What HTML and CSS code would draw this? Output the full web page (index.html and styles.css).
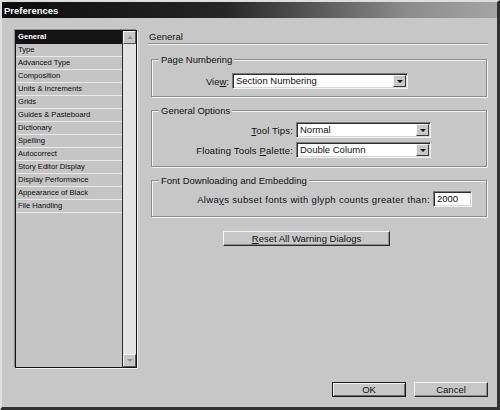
FILE: index.html
```html
<!DOCTYPE html>
<html>
<head>
<meta charset="utf-8">
<title>Preferences</title>
<link rel="stylesheet" href="styles.css">
</head>
<body>
<div class="window">
  <div class="titlebar"><span class="title">Preferences</span></div>
  <div class="content">
    <div class="top">
      <div class="list">
        <ul class="items">
          <li class="item selected">General</li>
          <li class="item">Type</li>
          <li class="item">Advanced Type</li>
          <li class="item">Composition</li>
          <li class="item">Units &amp; Increments</li>
          <li class="item">Grids</li>
          <li class="item">Guides &amp; Pasteboard</li>
          <li class="item">Dictionary</li>
          <li class="item">Spelling</li>
          <li class="item">Autocorrect</li>
          <li class="item">Story Editor Display</li>
          <li class="item">Display Performance</li>
          <li class="item">Appearance of Black</li>
          <li class="item">File Handling</li>
        </ul>
        <div class="scrollbar">
          <div class="sb-btn"><span class="sb-arrow up"></span></div>
          <div class="sb-track"></div>
          <div class="sb-btn"><span class="sb-arrow down"></span></div>
        </div>
      </div>
      <div class="panel">
        <div class="heading">General</div>
        <fieldset class="group g1">
          <legend>Page Numbering</legend>
          <div class="row">
            <span class="lbl lbl-g1">Vie<u>w</u>:</span>
            <div class="select sel-g1"><span class="val">Section Numbering</span><span class="arrow-btn"><span class="tri"></span></span></div>
          </div>
        </fieldset>
        <fieldset class="group g2">
          <legend>General Options</legend>
          <div class="row">
            <span class="lbl lbl-g2"><u>T</u>ool Tips:</span>
            <div class="select sel-g2"><span class="val">Normal</span><span class="arrow-btn"><span class="tri"></span></span></div>
          </div>
          <div class="row row-gap">
            <span class="lbl lbl-g2">Floating Tools <u>P</u>alette:</span>
            <div class="select sel-g2"><span class="val">Double Column</span><span class="arrow-btn"><span class="tri"></span></span></div>
          </div>
        </fieldset>
        <fieldset class="group g3">
          <legend>Font Downloading and Embedding</legend>
          <div class="row">
            <span class="lbl lbl-g3">Alwa<u>y</u>s subset fonts with glyph counts greater than:</span>
            <div class="input"><span class="val">2000</span></div>
          </div>
        </fieldset>
        <div class="reset-row"><div class="btn reset"><u>R</u>eset All Warning Dialogs</div></div>
      </div>
    </div>
    <div class="footer">
      <div class="btn default">OK</div>
      <div class="btn">Cancel</div>
    </div>
  </div>
</div>
</body>
</html>
```

FILE: styles.css
```css
* { box-sizing: border-box; }
html, body { margin: 0; padding: 0; }
body {
  width: 500px;
  height: 410px;
  background: #c7c7c7;
  font-family: "Liberation Sans", Arial, sans-serif;
  font-size: 9.5px;
  color: #111;
}
u { text-decoration: underline; text-underline-offset: 1px; }

.window {
  width: 500px;
  height: 410px;
  background: #c7c7c7;
  border-style: solid;
  border-width: 2px 3px 3px 2px;
  border-color: #dedede #303030 #303030 #dedede;
  display: flex;
  flex-direction: column;
}

.titlebar {
  height: 16px;
  flex: none;
  background: linear-gradient(to right, #0c0c0c 0%, #262626 45%, #8c8c8c 82%, #a4a4a4 100%);
  display: flex;
  align-items: center;
  padding-left: 2px;
}
.title {
  color: #fff;
  font-weight: bold;
  font-size: 9.5px;
}

.content {
  flex: 1;
  display: flex;
  flex-direction: column;
  padding: 12px 9px 0 13px;
}

.top {
  display: flex;
  height: 338px;
  flex: none;
}

/* ---------- list ---------- */
.list {
  width: 122px;
  height: 338px;
  border: 1px solid #141414;
  box-shadow: 1px 1px 0 #f0f0f0, -1px -1px 0 #8a8a8a;
  display: flex;
  background: #c5c5c5;
}
.items {
  list-style: none;
  margin: 0;
  padding: 0;
  width: 106px;
  flex: none;
}
.item {
  height: 13px;
  line-height: 12px;
  padding-left: 2px;
  font-size: 7.6px;
  border-bottom: 1px solid #e9e9e9;
  color: #0a0a0a;
  white-space: nowrap;
}
.item.selected {
  background: #141414;
  color: #fff;
  font-weight: bold;
  border-bottom-color: #141414;
}

.scrollbar {
  width: 14px;
  flex: none;
  border-left: 1px solid #2a2a2a;
  display: flex;
  flex-direction: column;
  background: #e3e3e3;
}
.sb-btn {
  height: 13px;
  flex: none;
  background: #c7c7c7;
  border-style: solid;
  border-width: 1px;
  border-color: #f4f4f4 #5a5a5a #5a5a5a #f4f4f4;
  display: flex;
  align-items: center;
  justify-content: center;
}
.sb-track { flex: 1; }
.sb-arrow {
  width: 0;
  height: 0;
  border-left: 3px solid transparent;
  border-right: 3px solid transparent;
}
.sb-arrow.up { border-bottom: 3px solid #8f8f8f; }
.sb-arrow.down { border-top: 3px solid #8f8f8f; }

/* ---------- panel ---------- */
.panel {
  margin-left: 11px;
  width: 340px;
  display: flex;
  flex-direction: column;
}
.heading {
  height: 14px;
  line-height: 13px;
  padding-left: 1px;
  border-bottom: 1px solid #8a8a8a;
  box-shadow: 0 1px 0 #f4f4f4;
}

.group {
  margin: 0 1px 0 3px;
  padding: 0;
  min-width: 0;
  border: 1px solid #8a8a8a;
  box-shadow: inset 1px 1px 0 #f4f4f4, 1px 1px 0 #f4f4f4;
}
.group legend {
  margin-left: 7px;
  padding: 0 2px;
  line-height: 13px;
  height: 13px;
  background: #c7c7c7;
  font-size: 9.5px;
}
.g1 { margin-top: 9px; padding: 7px 0 7px 0; }
.g2 { margin-top: 7px; padding: 5px 0 8px 0; }
.g3 { margin-top: 7px; padding: 4px 0 9px 0; }

.row {
  display: flex;
  align-items: center;
  height: 16px;
}
.row-gap { margin-top: 4px; }
.lbl {
  text-align: right;
  white-space: nowrap;
  flex: none;
}
.lbl-g1 { width: 77px; margin-right: 3px; }
.lbl-g2 { width: 141px; margin-right: 3px; letter-spacing: 0.15px; }
.lbl-g3 { width: 278px; margin-right: 3px; letter-spacing: 0.33px; }

.select, .input {
  height: 16px;
  background: #fff;
  border-style: solid;
  border-width: 1px;
  border-color: #7c7c7c #f4f4f4 #f4f4f4 #7c7c7c;
  box-shadow: inset 1px 1px 0 #2e2e2e, inset -1px -1px 0 #d8d8d8;
  display: flex;
  align-items: center;
  flex: none;
  padding: 1px;
}
.sel-g1 { width: 176px; }
.sel-g2 { width: 135px; }
.input { width: 39px; }
.val {
  flex: 1;
  padding-left: 2px;
  line-height: 12px;
  white-space: nowrap;
  color: #111;
}
.arrow-btn {
  width: 13px;
  height: 12px;
  flex: none;
  background: #c7c7c7;
  border-style: solid;
  border-width: 1px;
  border-color: #f4f4f4 #3a3a3a #3a3a3a #f4f4f4;
  display: flex;
  align-items: center;
  justify-content: center;
}
.tri {
  width: 0;
  height: 0;
  border-left: 3px solid transparent;
  border-right: 3px solid transparent;
  border-top: 3px solid #111;
}

.reset-row {
  margin-top: 14px;
  padding-left: 75px;
  display: flex;
}

/* ---------- buttons ---------- */
.btn {
  height: 15px;
  width: 74px;
  background: #c7c7c7;
  border-style: solid;
  border-width: 1px;
  border-color: #f4f4f4 #2a2a2a #2a2a2a #f4f4f4;
  box-shadow: inset -1px -1px 0 #8a8a8a;
  display: flex;
  align-items: center;
  justify-content: center;
  line-height: 12px;
  white-space: nowrap;
}
.btn.reset { width: 167px; }
.btn.default {
  border-color: #1a1a1a;
  box-shadow: inset 1px 1px 0 #f4f4f4, inset -1px -1px 0 #6a6a6a;
}

.footer {
  margin-top: 14px;
  display: flex;
  justify-content: flex-end;
  gap: 8px;
}
```
